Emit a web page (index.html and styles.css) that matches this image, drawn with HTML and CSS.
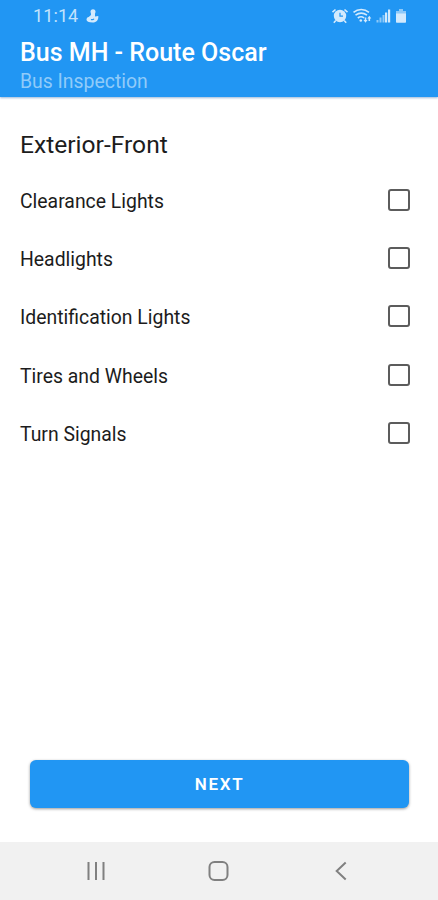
FILE: index.html
```html
<!DOCTYPE html>
<html lang="en">
<head>
    <meta charset="UTF-8" />
    <meta name="viewport" content="width=device-width, initial-scale=1" />
    <title>Bus Inspection</title>
    <link rel="stylesheet" href="styles.css">
</head>
<body>
    <header class="app-bar">
        <div class="status-bar">
            <span class="clock">11:14</span>
            <svg class="status-app" width="13" height="14" viewBox="0 0 13 14">
                <circle cx="7" cy="2.700" r="2.500" />
                <path d="M5 3.500h4v4l3.300-.5c.3 4-1.700 6.500-5.700 6.500S.5 12.300.5 10.700 1.500 8.300 2.700 8L5 6z" />
                <path class="cut" d="M5 10.500c1.200.4 2.500 0 3-.8" />
            </svg>
            <svg class="status-icons" width="78" height="16" viewBox="0 0 78 16">
                <!-- alarm -->
                <circle cx="10" cy="8" r="6.200" />
                <path class="line" d="M2.500 4.200l3-2.700M17.500 4.200l-3-2.700M5.800 12.500l-2 2.200M14.200 12.500l2 2.200" />
                <path class="cut" d="M10 4.700v3.500h3" />
                <!-- wifi -->
                <path class="line" d="M23.500 4.300c4.500-3.700 11-3.700 15.500 0M25.500 7.200c3.500-2.600 8-2.600 11.500 0M27.800 10c2-1.500 4.500-1.500 6.300 0" />
                <circle cx="30.800" cy="12.500" r="1.300" />
                <path d="M33.500 12h1.200V9.500h1.600V12h1.200l-2 2.700zM37.300 10.500h1.200V13h1.600v-2.500h1.200L39.300 7.800z" />
                <!-- signal -->
                <path class="dim" d="M46.500 12h2v2.500h-2zM49.500 9.500h2v5h-2z" />
                <path class="dim" d="M52.500 7h2v7.500h-2z" />
                <path d="M55 4.500h2.200v10H55zM58 1.500h2.200v13H58z" />
                <!-- battery -->
                <path class="dim" d="M69 1h4v2h3v3H66V3h3z" />
                <path d="M66 5.500h10V14a.7.7 0 0 1-.7.700h-8.600a.7.7 0 0 1-.7-.7z" />
            </svg>
        </div>
        <h1 class="title">Bus MH - Route Oscar</h1>
        <div class="subtitle">Bus Inspection</div>
    </header>

    <main class="content">
        <h2 class="section-title">Exterior-Front</h2>
        <label class="item">Clearance Lights<input type="checkbox" class="check"></label>
        <label class="item">Headlights<input type="checkbox" class="check"></label>
        <label class="item">Identification Lights<input type="checkbox" class="check"></label>
        <label class="item">Tires and Wheels<input type="checkbox" class="check"></label>
        <label class="item">Turn Signals<input type="checkbox" class="check"></label>
        <button class="next">NEXT</button>
    </main>

    <nav class="nav-bar">
        <svg width="22" height="22" viewBox="0 0 22 22"><path d="M3.500 2v18M11 2v18M18.500 2v18" /></svg>
        <svg width="22" height="22" viewBox="0 0 22 22"><rect x="1.500" y="2" width="18" height="18" rx="5" /></svg>
        <svg width="22" height="22" viewBox="0 0 22 22"><path d="M14.700 2.500L5.700 11l9 8.500" /></svg>
    </nav>
</body>
</html>
```

FILE: styles.css
```css
* {
    box-sizing: border-box;
}
body {
    margin: 0;
    height: 100vh;
    display: flex;
    flex-direction: column;
    background: #fff;
    color: #1c1c1c;
    font-family: Roboto, "Liberation Sans", sans-serif;
}
.app-bar {
    height: 97px;
    flex: none;
    padding: 0 20px;
    background: #2196f3;
    color: #fff;
    box-shadow: 0 1px 2px rgba(33,100,170,0.45);
}
.status-bar {
    display: flex;
    align-items: center;
    height: 31px;
    padding: 0 10px 0 13px;
    color: #c3e2fc;
}
.clock {
    font-size: 18px;
    letter-spacing: 0.1px;
}
.status-app {
    margin-left: 8px;
}
.status-icons {
    margin-left: auto;
}
.status-bar svg {
    fill: #d3eafd;
}
.status-bar .line {
    fill: none;
    stroke: #d3eafd;
    stroke-width: 1.6;
}
.status-bar .cut {
    fill: none;
    stroke: #2196f3;
    stroke-width: 1.2;
}
.status-bar .dim {
    fill: #8dc9f9;
}
.title {
    margin: 6px 0 0;
    font-size: 25px;
    line-height: 32px;
    font-weight: 500;
}
.subtitle {
    font-size: 19.4px;
    line-height: 26px;
    color: #90cbf9;
}
.content {
    flex: 1;
    display: flex;
    flex-direction: column;
    padding: 32px 20px 34px;
}
.section-title {
    margin: 0 0 10px;
    font-size: 24.6px;
    line-height: 32px;
    font-weight: 400;
}
.item {
    display: flex;
    align-items: center;
    justify-content: space-between;
    height: 58.4px;
    padding: 2px 8px 0 0;
    font-size: 19.4px;
}
.check {
    appearance: none;
    width: 22px;
    height: 22px;
    margin: 0 0 3px;
    border: 2px solid #5c5c5c;
    border-radius: 3px;
}
.next {
    height: 48px;
    margin: auto 9px 0 10px;
    border: none;
    border-radius: 6px;
    background: #2196f3;
    color: #fff;
    font-family: inherit;
    font-size: 17px;
    font-weight: 600;
    letter-spacing: 1.7px;
    box-shadow: 0 1px 3px rgba(0,0,0,0.4);
}
.nav-bar {
    height: 58px;
    flex: none;
    display: flex;
    align-items: center;
    justify-content: space-between;
    padding: 0 85px;
    background: #f1f1f1;
}
.nav-bar svg {
    fill: none;
    stroke: #808080;
    stroke-width: 2;
}
```
